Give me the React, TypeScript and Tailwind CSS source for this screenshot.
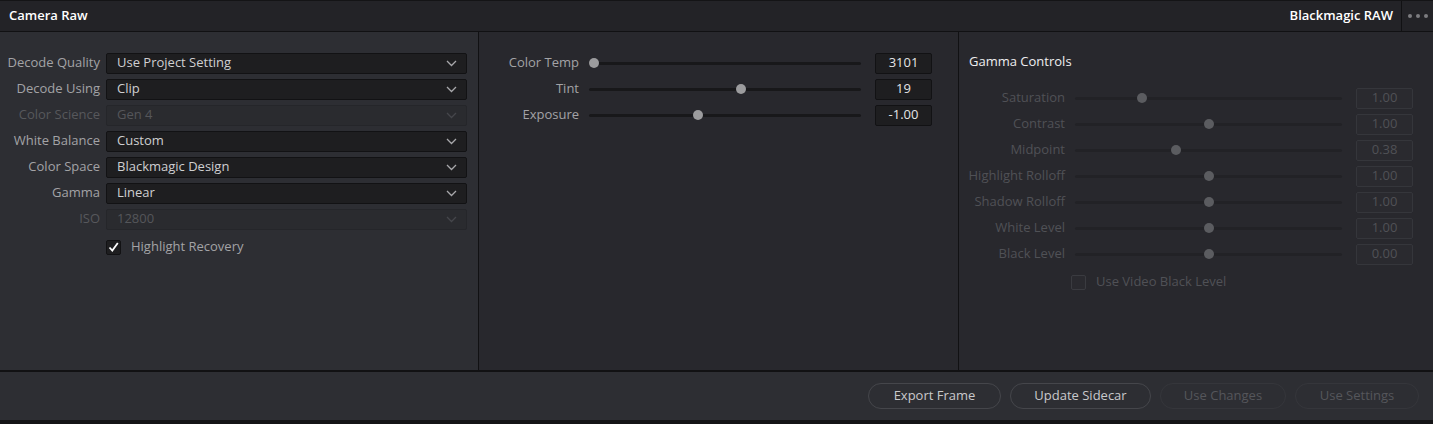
import React from 'react';

const font = { fontFamily: '"Open Sans", "Liberation Sans", sans-serif' };

type Pick = { label: string; value: string; disabled?: boolean };

const picks: Pick[] = [
  { label: 'Decode Quality', value: 'Use Project Setting' },
  { label: 'Decode Using', value: 'Clip' },
  { label: 'Color Science', value: 'Gen 4', disabled: true },
  { label: 'White Balance', value: 'Custom' },
  { label: 'Color Space', value: 'Blackmagic Design' },
  { label: 'Gamma', value: 'Linear' },
  { label: 'ISO', value: '12800', disabled: true },
];

const mainSliders = [
  { label: 'Color Temp', value: '3101', pos: 2 },
  { label: 'Tint', value: '19', pos: 56 },
  { label: 'Exposure', value: '-1.00', pos: 40 },
];

const gammaSliders = [
  { label: 'Saturation', value: '1.00', pos: 25 },
  { label: 'Contrast', value: '1.00', pos: 50 },
  { label: 'Midpoint', value: '0.38', pos: 38 },
  { label: 'Highlight Rolloff', value: '1.00', pos: 50 },
  { label: 'Shadow Rolloff', value: '1.00', pos: 50 },
  { label: 'White Level', value: '1.00', pos: 50 },
  { label: 'Black Level', value: '0.00', pos: 50 },
];

const Chevron: React.FC<{ dim?: boolean }> = ({ dim }) => (
  <svg width="11" height="7" viewBox="0 0 11 7" fill="none">
    <path d="M1 1l4.5 4.5L10 1" stroke={dim ? '#45464b' : '#a8a8ab'} strokeWidth="1.3" />
  </svg>
);

const Dropdown: React.FC<Pick> = ({ label, value, disabled }) => (
  <div className="flex items-center h-[26px]">
    <div className={`w-[100px] text-right text-[13px] ${disabled ? 'text-[#57585c]' : 'text-[#a3a3a6]'}`}>{label}</div>
    <div
      className={`ml-[6px] w-[361px] h-[21px] rounded-[2px] border flex items-center justify-between pl-[10px] pr-[9px] ${
        disabled ? 'bg-[#2a2b2f] border-[#25262a]' : 'bg-[#1e1e20] border-[#121214]'
      }`}
    >
      <span className={`text-[13px] ${disabled ? 'text-[#55565a]' : 'text-[#cfcfd1]'}`}>{value}</span>
      <Chevron dim={disabled} />
    </div>
  </div>
);

const Slider: React.FC<{
  label: string;
  value: string;
  pos: number;
  labelW: number;
  trackW: number;
  disabled?: boolean;
}> = ({ label, value, pos, labelW, trackW, disabled }) => (
  <div className="flex items-center h-[26px]">
    <div
      className={`text-right text-[13px] ${disabled ? 'text-[#505156]' : 'text-[#a3a3a6]'}`}
      style={{ width: labelW }}
    >
      {label}
    </div>
    <div className="relative ml-[10px] h-[10px] flex items-center" style={{ width: trackW }}>
      <div className={`w-full h-[3px] rounded-full ${disabled ? 'bg-[#222226]' : 'bg-[#18181a]'}`} />
      <div
        className={`absolute w-[10px] h-[10px] rounded-full ${disabled ? 'bg-[#5b5c60]' : 'bg-[#9c9c9e]'}`}
        style={{ left: `calc(${pos}% - 5px)` }}
      />
    </div>
    <div
      className={`ml-[14px] w-[57px] h-[21px] rounded-[2px] border flex items-center justify-center text-[13px] ${
        disabled ? 'border-[#35363b] bg-[#2a2a2f] text-[#505156]' : 'border-[#121214] bg-[#1e1e20] text-[#e4e4e6]'
      }`}
    >
      {value}
    </div>
  </div>
);

const Check: React.FC<{ checked?: boolean; label: string; disabled?: boolean }> = ({ checked, label, disabled }) => (
  <div className="flex items-center h-[26px]">
    <div
      className={`w-[15px] h-[15px] rounded-[2px] border flex items-center justify-center ${
        disabled ? 'border-[#3a3b40] bg-[#2a2a2f]' : 'border-[#121214] bg-[#1e1e20]'
      }`}
    >
      {checked && (
        <svg width="11" height="10" viewBox="0 0 11 10" fill="none">
          <path d="M1.5 5.5l2.8 3L9.8 1" stroke="#ffffff" strokeWidth="1.8" />
        </svg>
      )}
    </div>
    <span className={`ml-[10px] text-[13px] ${disabled ? 'text-[#505156]' : 'text-[#a3a3a6]'}`}>{label}</span>
  </div>
);

const Pill: React.FC<{ label: string; w: number; disabled?: boolean }> = ({ label, w, disabled }) => (
  <button
    className={`h-[26px] rounded-full border text-[13px] ${
      disabled ? 'border-[#35363b] text-[#55565b]' : 'border-[#45464b] text-[#c9c9cc]'
    }`}
    style={{ width: w }}
  >
    {label}
  </button>
);

const App: React.FC = () => {
  return (
    <div className="w-[1433px] h-[424px] bg-[#141416] pt-px pb-[4px] flex flex-col" style={font}>
      {/* header */}
      <div className="h-[31px] bg-[#232327] border-b border-[#111113] flex items-center shrink-0">
        <div className="pl-[9px] text-[13px] font-semibold text-white">Camera Raw</div>
        <div className="ml-auto pr-[8px] text-[13px] font-semibold text-white">Blackmagic RAW</div>
        <div className="h-full w-[32px] border-l border-[#111113] flex items-center justify-center gap-[4px]">
          <span className="w-[4px] h-[4px] rounded-full bg-[#7d7d80]" />
          <span className="w-[4px] h-[4px] rounded-full bg-[#7d7d80]" />
          <span className="w-[4px] h-[4px] rounded-full bg-[#7d7d80]" />
        </div>
      </div>

      <div className="flex h-[340px] shrink-0 border-b-2 border-[#111113]">
        <div className="w-[479px] bg-[#2d2e33] border-r border-[#111113] pt-[18px] shrink-0">
          {picks.map(p => (
            <Dropdown key={p.label} {...p} />
          ))}
          <div className="pl-[106px] mt-[2px]">
            <Check checked label="Highlight Recovery" />
          </div>
        </div>

        <div className="w-[480px] bg-[#28282d] border-r border-[#111113] pt-[18px] shrink-0">
          {mainSliders.map(s => (
            <Slider key={s.label} {...s} labelW={100} trackW={272} />
          ))}
        </div>

        <div className="flex-1 bg-[#28282d]">
          <div className="h-[26px] mt-[17px] pl-[10px] flex items-center text-[13px] text-[#eeeef0]">Gamma Controls</div>
          <div className="mt-[10px]">
            {gammaSliders.map(s => (
              <Slider key={s.label} {...s} labelW={106} trackW={267} disabled />
            ))}
          </div>
          <div className="pl-[112px] mt-[2px]">
            <Check label="Use Video Black Level" disabled />
          </div>
        </div>
      </div>

      <div className="flex-1 bg-[#2d2e33] flex items-center justify-end gap-[9px] pr-[14px]">
        <Pill label="Export Frame" w={133} />
        <Pill label="Update Sidecar" w={141} />
        <Pill label="Use Changes" w={126} disabled />
        <Pill label="Use Settings" w={124} disabled />
      </div>
    </div>
  );
};

export default App;
